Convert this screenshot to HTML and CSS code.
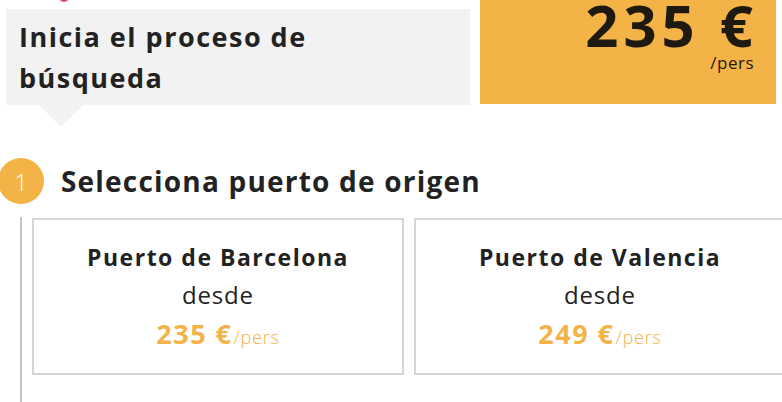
FILE: index.html
```html
<!DOCTYPE html>
<html lang="es">
<head>
<meta charset="utf-8">
<link rel="stylesheet" href="styles.css">
</head>
<body>
<div class="page">
  <span class="pink-dot"></span>
  <div class="top">
    <div class="intro">
      <h1 class="intro-title">Inicia el proceso de búsqueda</h1>
    </div>
    <div class="price-box">
      <div class="price-big">235 €</div>
      <div class="price-per">/pers</div>
    </div>
  </div>
  <div class="step">
    <div class="step-head">
      <span class="step-num">1</span>
      <h2 class="step-title">Selecciona puerto de origen</h2>
    </div>
    <div class="step-body">
      <div class="card">
        <div class="card-title">Puerto de Barcelona</div>
        <div class="card-from">desde</div>
        <div class="card-price"><span class="amt">235 €</span><span class="per">/pers</span></div>
      </div>
      <div class="card">
        <div class="card-title">Puerto de Valencia</div>
        <div class="card-from">desde</div>
        <div class="card-price"><span class="amt">249 €</span><span class="per">/pers</span></div>
      </div>
    </div>
  </div>
</div>
</body>
</html>
```

FILE: styles.css
```css
html, body {
  margin: 0;
  padding: 0;
  background: #ffffff;
}
body {
  width: 782px;
  height: 402px;
  overflow: hidden;
  font-family: "Open Sans", "DejaVu Sans", sans-serif;
  color: #222222;
}
.page {
  position: relative;
  width: 782px;
  height: 402px;
}
.pink-dot {
  position: absolute;
  left: 59px;
  top: -8px;
  width: 10px;
  height: 10px;
  border-radius: 50%;
  background: #e8445f;
}
.top {
  display: flex;
  align-items: flex-start;
}
.intro {
  position: relative;
  margin: 9px 0 0 6px;
  width: 464px;
  height: 96px;
  background: #f2f2f2;
  box-sizing: border-box;
  padding: 7px 100px 0 13px;
}
.intro::after {
  content: "";
  position: absolute;
  left: 33px;
  top: 96px;
  border-left: 22px solid transparent;
  border-right: 22px solid transparent;
  border-top: 22px solid #f2f2f2;
}
.intro-title {
  margin: 0;
  font-size: 27px;
  font-weight: 700;
  letter-spacing: 1.5px;
  line-height: 41px;
  color: #222222;
}
.price-box {
  margin-left: 10px;
  width: 296px;
  height: 104px;
  background: #f4b346;
  box-sizing: border-box;
  padding: 0 18px 0 0;
  text-align: right;
  color: #1f1a10;
}
.price-big {
  font-size: 58px;
  font-weight: 700;
  line-height: 50px;
  letter-spacing: 5px;
}
.price-per {
  font-size: 17px;
  font-weight: 400;
  line-height: 20px;
  margin-top: 3px;
  padding-right: 4px;
  letter-spacing: 0.5px;
}
.step {
  margin-top: 53px;
}
.step-head {
  display: flex;
  align-items: center;
  gap: 17px;
  margin-left: -2px;
}
.step-num {
  width: 46px;
  height: 46px;
  border-radius: 50%;
  background: #f4b346;
  color: #ffffff;
  font-size: 24px;
  font-weight: 300;
  display: flex;
  align-items: center;
  justify-content: center;
}
.step-title {
  margin: 0;
  font-size: 28px;
  font-weight: 700;
  letter-spacing: 1.2px;
  color: #222222;
}
.step-body {
  margin: 13px 0 0 20px;
  border-left: 2px solid #c6c6c6;
  padding: 1px 0 30px 10px;
  display: flex;
  gap: 10px;
}
.card {
  flex: 0 0 372px;
  height: 157px;
  box-sizing: border-box;
  border: 2px solid #d6d6d6;
  text-align: center;
  padding-top: 19px;
}
.card-title {
  font-size: 23px;
  font-weight: 700;
  letter-spacing: 1.5px;
  line-height: 37px;
}
.card-from {
  font-size: 24px;
  font-weight: 400;
  letter-spacing: 0.8px;
  line-height: 37px;
}
.card-price {
  line-height: 42px;
  color: #f4b346;
}
.card-price .amt {
  font-size: 27px;
  font-weight: 700;
  letter-spacing: 1.5px;
}
.card-price .per {
  font-size: 18px;
  font-weight: 300;
  letter-spacing: 0.8px;
  margin-left: 1px;
}
```
